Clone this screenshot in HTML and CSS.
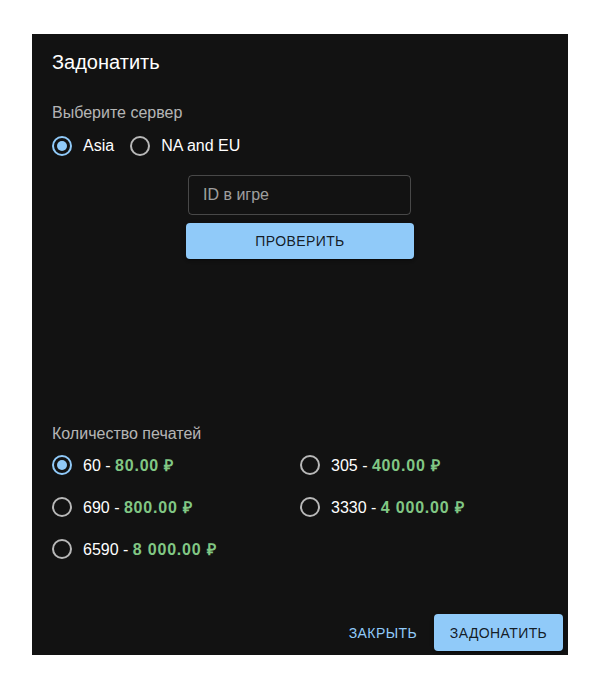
FILE: index.html
```html
<!DOCTYPE html>
<html lang="ru">
<head>
<meta charset="utf-8">
<link rel="stylesheet" href="styles.css">
</head>
<body>
<div class="dialog">
  <h2 class="title">Задонатить</h2>
  <div class="content">
    <div class="label">Выберите сервер</div>
    <div class="server-row">
      <label class="radio checked"><span class="ring"></span><span class="text">Asia</span></label>
      <label class="radio"><span class="ring"></span><span class="text">NA and EU</span></label>
    </div>
    <div class="id-box">
      <div class="input">ID в игре</div>
      <div class="btn-contained btn-check">ПРОВЕРИТЬ</div>
    </div>
    <div class="label label-amount">Количество печатей</div>
    <div class="options">
      <label class="radio checked"><span class="ring"></span><span class="text">60 - <b class="price">80.00 ₽</b></span></label>
      <label class="radio"><span class="ring"></span><span class="text">305 - <b class="price">400.00 ₽</b></span></label>
      <label class="radio"><span class="ring"></span><span class="text">690 - <b class="price">800.00 ₽</b></span></label>
      <label class="radio"><span class="ring"></span><span class="text">3330 - <b class="price">4 000.00 ₽</b></span></label>
      <label class="radio"><span class="ring"></span><span class="text">6590 - <b class="price">8 000.00 ₽</b></span></label>
    </div>
  </div>
  <div class="actions">
    <div class="btn-text">ЗАКРЫТЬ</div>
    <div class="btn-contained btn-donate">ЗАДОНАТИТЬ</div>
  </div>
</div>
</body>
</html>
```

FILE: styles.css
```css
* { box-sizing: border-box; }
body {
  margin: 0;
  background: #fff;
  font-family: "Liberation Sans", Arial, sans-serif;
}
.dialog {
  margin: 34px 0 0 32px;
  width: 536px;
  height: 621px;
  background: #121212;
  color: #fff;
  display: flex;
  flex-direction: column;
}
.title {
  margin: 0;
  padding: 16px 20px 0;
  font-size: 20px;
  line-height: 24px;
  font-weight: 400;
}
.content {
  padding: 27px 20px 0;
}
.label {
  font-size: 16px;
  line-height: 24px;
  color: rgba(255,255,255,0.7);
}
.server-row {
  display: flex;
  gap: 16px;
  height: 42px;
  align-items: center;
}
.radio {
  display: flex;
  align-items: center;
  gap: 11px;
  font-size: 16px;
  color: #fff;
  height: 42px;
}
.ring {
  width: 20px;
  height: 20px;
  border-radius: 50%;
  border: 2px solid rgba(255,255,255,0.7);
  position: relative;
  flex: none;
}
.checked .ring { border-color: #90caf9; }
.checked .ring::after {
  content: "";
  position: absolute;
  left: 3px; top: 3px;
  width: 10px; height: 10px;
  border-radius: 50%;
  background: #90caf9;
}
.id-box {
  display: flex;
  flex-direction: column;
  align-items: center;
  padding-top: 8px;
  height: 256px;
}
.input {
  width: 223px;
  height: 40px;
  border: 1px solid rgba(255,255,255,0.23);
  border-radius: 4px;
  padding: 0 14px;
  display: flex;
  align-items: center;
  font-size: 16px;
  color: rgba(255,255,255,0.6);
  margin-left: -1px;
}
.btn-contained {
  background: #90caf9;
  color: rgba(0,0,0,0.87);
  border-radius: 4px;
  font-size: 14px;
  letter-spacing: 0.4px;
  display: flex;
  align-items: center;
  justify-content: center;
  box-shadow: 0 3px 1px -2px rgba(0,0,0,0.2), 0 2px 2px 0 rgba(0,0,0,0.14), 0 1px 5px 0 rgba(0,0,0,0.12);
}
.btn-check {
  margin-top: 8px;
  width: 228px;
  height: 36px;
}
.label-amount {
  line-height: 20px;
  margin-top: 1px;
}
.options {
  display: grid;
  grid-template-columns: 248px 248px;
}
.price {
  color: #81c784;
  font-weight: 700;
  letter-spacing: 0.8px;
}
.actions {
  margin-top: auto;
  display: flex;
  justify-content: flex-end;
  align-items: center;
  gap: 9px;
  padding: 0 5px 4px 0;
}
.btn-text {
  color: #90caf9;
  font-size: 14px;
  letter-spacing: 0.4px;
  padding: 0 8px;
  height: 37px;
  display: flex;
  align-items: center;
}
.btn-donate {
  width: 129px;
  height: 37px;
}
```
